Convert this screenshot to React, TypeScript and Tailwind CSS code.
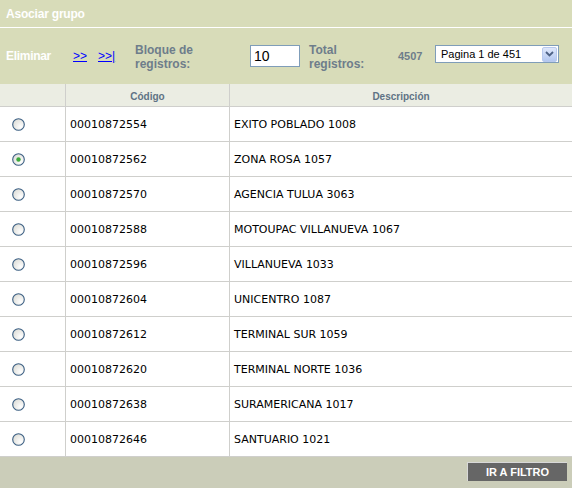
import type React from "react"

const rows = [
  { code: "00010872554", desc: "EXITO POBLADO 1008" },
  { code: "00010872562", desc: "ZONA ROSA 1057", checked: true },
  { code: "00010872570", desc: "AGENCIA TULUA 3063" },
  { code: "00010872588", desc: "MOTOUPAC VILLANUEVA 1067" },
  { code: "00010872596", desc: "VILLANUEVA 1033" },
  { code: "00010872604", desc: "UNICENTRO 1087" },
  { code: "00010872612", desc: "TERMINAL SUR 1059" },
  { code: "00010872620", desc: "TERMINAL NORTE 1036" },
  { code: "00010872638", desc: "SURAMERICANA 1017" },
  { code: "00010872646", desc: "SANTUARIO 1021" },
]

const Radio: React.FC<{ checked?: boolean }> = ({ checked }) => (
  <svg width="13" height="13" viewBox="0 0 13 13">
    <defs>
      <radialGradient id="rg" cx="0.7" cy="0.7" r="0.8">
        <stop offset="0" stopColor="#ffffff" />
        <stop offset="1" stopColor="#dcdcd6" />
      </radialGradient>
    </defs>
    <circle cx="6.5" cy="6.5" r="5.8" fill="url(#rg)" stroke="#3a5e82" strokeWidth="1.1" />
    {checked && <circle cx="6.5" cy="6.5" r="2.2" fill="#3caa3c" />}
  </svg>
)

export default function App() {
  return (
    <div className="w-[572px] h-[488px] bg-white font-['Liberation_Sans',Arial,sans-serif] overflow-hidden">
      {/* Title bar */}
      <div className="h-[27px] bg-[#d8dcb9] border-b border-white flex items-center px-[6px] box-content">
        <span className="text-white text-[12px] font-bold tracking-[-0.2px]">Asociar grupo</span>
      </div>

      {/* Toolbar */}
      <div className="h-[56px] bg-[#d8dcb9] flex items-center">
        <span className="ml-[6px] w-[67px] text-white text-[12px] font-bold tracking-[-0.3px]">Eliminar</span>
        <a className="text-[#0000ff] underline text-[12px] w-[25px]">&gt;&gt;</a>
        <a className="text-[#0000ff] underline text-[12px] w-[37px]">&gt;&gt;|</a>
        <span className="w-[115px] text-[#6e7d8b] text-[12px] font-bold leading-[14px] mt-[2px]">Bloque de<br />registros:</span>
        <div className="w-[50px] h-[22px] border border-[#7f9db9] bg-white flex items-center pl-[3px] text-[14px] text-black">10</div>
        <span className="ml-[9px] w-[89px] text-[#6e7d8b] text-[12px] font-bold leading-[14px] mt-[2px]">Total<br />registros:</span>
        <span className="w-[37px] text-[#6e7d8b] text-[11px] font-bold">4507</span>
        <div className="w-[124px] h-[18px] border border-[#7f9db9] bg-white flex items-center justify-between mb-[4px]">
          <span className="pl-[5px] text-[11px] text-black">Pagina 1 de 451</span>
          <div className="w-[15px] h-[15px] mr-[1px] rounded-[2px] bg-gradient-to-b from-[#dfe8fb] to-[#b3c7f0] border border-[#b8c9ee] flex items-center justify-center">
            <svg width="9" height="6" viewBox="0 0 9 6"><path d="M1 1 L4.5 4.5 L8 1" stroke="#4d6185" strokeWidth="1.8" fill="none" /></svg>
          </div>
        </div>
      </div>

      {/* Table */}
      <div className="grid grid-cols-[66px_164px_1fr] font-['DejaVu_Sans',Verdana,sans-serif]">
        <div className="h-[23px] bg-[#ebede3] border-r border-b border-[#cfcfcc]"></div>
        <div className="h-[23px] bg-[#ebede3] border-r border-b border-[#cfcfcc] flex items-center justify-center pt-[2px] font-['Liberation_Sans',Arial,sans-serif] text-[10px] font-bold text-[#5f7385]">Código</div>
        <div className="h-[23px] bg-[#ebede3] border-b border-[#cfcfcc] flex items-center justify-center pt-[2px] font-['Liberation_Sans',Arial,sans-serif] text-[10px] font-bold text-[#5f7385]">Descripción</div>
        {rows.map((r) => (
          <div key={r.code} className="contents">
            <div className="h-[35px] border-r border-b border-[#cfcfcc] flex items-center pl-[12px]">
              <Radio checked={r.checked} />
            </div>
            <div className="h-[35px] border-r border-b border-[#cfcfcc] flex items-center pl-[4px] pt-[2px] text-[11px] text-black">{r.code}</div>
            <div className="h-[35px] border-b border-[#cfcfcc] flex items-center pl-[4px] pt-[2px] text-[11px] text-black">{r.desc}</div>
          </div>
        ))}
      </div>

      {/* Footer */}
      <div className="h-[31px] bg-[#cbcdb9] flex items-start justify-end pt-[5px] pr-[5px]">
        <button className="w-[100px] h-[19px] bg-[#666666] border-t border-l border-[#d8d8d8] text-white text-[11px] font-bold flex items-center justify-center">IR A FILTRO</button>
      </div>
    </div>
  )
}
